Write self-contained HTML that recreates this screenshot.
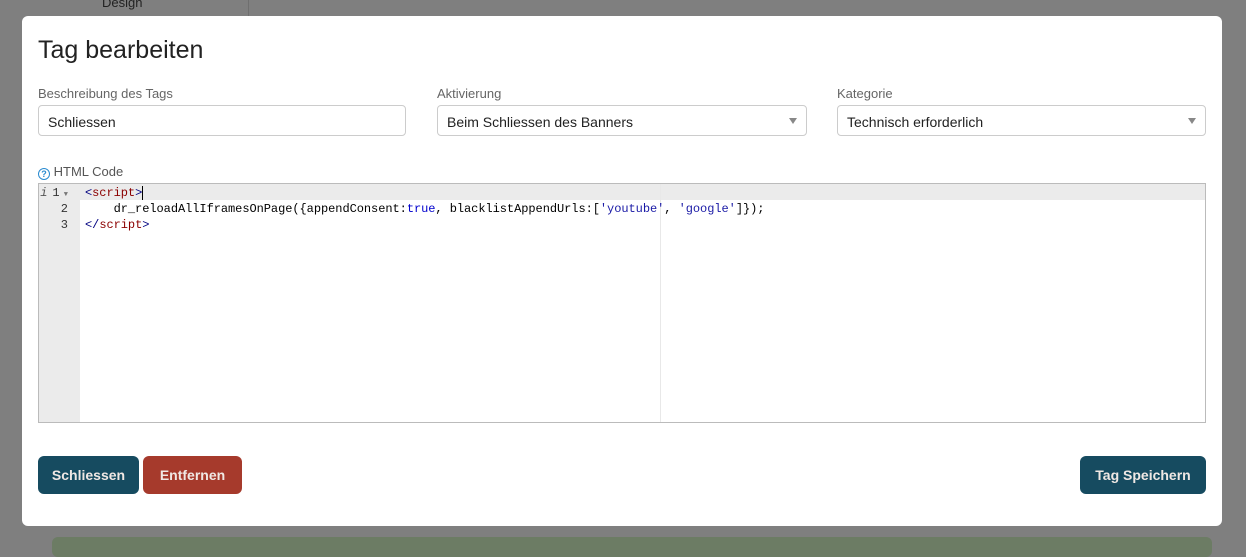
<!DOCTYPE html>
<html><head><style>
body{margin:0;width:1246px;height:550px;background:#7f7f7f;position:relative;overflow:hidden;font-family:"Liberation Sans",sans-serif;}
.modal{position:absolute;left:22px;top:16px;width:1200px;height:510px;background:#fff;border-radius:6px;}
h1{position:absolute;left:16px;top:20px;margin:0;font-size:25px;font-weight:normal;color:#222;}
.lbl{position:absolute;font-size:13px;color:#666;}
.inp{position:absolute;top:89px;width:368px;height:31px;border:1px solid #ccc;border-radius:4px;box-sizing:border-box;font-size:14px;color:#222;padding:8px 9px;}
.arr{position:absolute;right:9px;top:12px;width:0;height:0;border-left:4px solid transparent;border-right:4px solid transparent;border-top:6px solid #888;}
.ed{position:absolute;left:16px;top:167px;width:1168px;height:240px;border:1px solid #bbb;box-sizing:border-box;font-family:"Liberation Mono",monospace;font-size:12px;line-height:16px;overflow:hidden;}
.gut{position:absolute;left:0;top:0;width:41px;height:100%;background:#ebebeb;}
.act{position:absolute;left:0;top:0;width:100%;height:16px;background:#ebebeb;}
.pm{position:absolute;left:621px;top:0;width:1px;height:100%;background:#e8e8e8;}
.ln{position:absolute;left:0;width:29px;text-align:right;color:#333;}
.code{position:absolute;left:46px;top:1px;white-space:pre;color:#000;letter-spacing:-0.05px;}
.t{color:#000080}.k{color:#8b0000}.b{color:#0000cd}.s{color:#1a1aa6}
.btn{position:absolute;top:440px;height:38px;border-radius:6px;color:#f0e8e4;font-weight:bold;font-size:14px;text-align:center;line-height:38px;}
</style></head><body>
<div style="position:absolute;left:248px;top:0;width:1px;height:16px;background:#6f6f6f"></div>
<div style="position:absolute;left:102px;top:-5px;font-size:13px;color:#222">Design</div>
<div style="position:absolute;left:52px;top:537px;width:1160px;height:20px;background:#6c7c64;border-radius:6px"></div>
<div class="modal">
<h1>Tag bearbeiten</h1>
<div class="lbl" style="left:16px;top:70px">Beschreibung des Tags</div>
<div class="lbl" style="left:415px;top:70px">Aktivierung</div>
<div class="lbl" style="left:815px;top:70px">Kategorie</div>
<div class="inp" style="left:16px">Schliessen</div>
<div class="inp" style="left:415px;width:370px">Beim Schliessen des Banners<div class="arr"></div></div>
<div class="inp" style="left:815px;width:369px">Technisch erforderlich<div class="arr"></div></div>
<div class="lbl" style="left:16px;top:148px;color:#555"><span style="display:inline-block;width:10px;height:10px;border:1.5px solid #2a8bd0;border-radius:50%;color:#2a8bd0;font-size:9px;line-height:10px;text-align:center;font-weight:bold;vertical-align:-1px">?</span> HTML Code</div>
<div class="ed">
<div class="gut"></div><div class="act"></div><div class="pm"></div>
<div class="ln" style="top:1px"><span style="font-style:italic;color:#555;margin-right:5px">i</span>1<span style="font-size:7px;color:#777"> ▼</span></div>
<div class="ln" style="top:17px">2</div>
<div class="ln" style="top:33px">3</div>
<div class="code"><span class="t">&lt;</span><span class="k">script</span><span class="t">&gt;</span><span style="border-left:1px solid #000"></span>
    dr_reloadAllIframesOnPage({appendConsent:<span class="b">true</span>, blacklistAppendUrls:[<span class="s">'youtube'</span>, <span class="s">'google'</span>]});
<span class="t">&lt;/</span><span class="k">script</span><span class="t">&gt;</span></div>
</div>
<div class="btn" style="left:16px;width:101px;background:#164b60">Schliessen</div>
<div class="btn" style="left:121px;width:99px;background:#a63a2c">Entfernen</div>
<div class="btn" style="left:1058px;width:126px;background:#164b60">Tag Speichern</div>
</div>
</body></html>
